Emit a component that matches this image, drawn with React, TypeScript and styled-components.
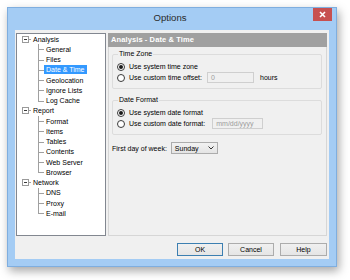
import styled, { createGlobalStyle } from 'styled-components';

const GlobalStyle = createGlobalStyle`
  html, body {
    margin: 0;
    padding: 0;
    background: #ffffff;
  }
  body {
    font-family: 'Liberation Sans', Arial, sans-serif;
  }
  * {
    box-sizing: border-box;
  }
`;

type TreeNode = { label: string; children: string[] };

const tree: TreeNode[] = [
  {
    label: 'Analysis',
    children: ['General', 'Files', 'Date & Time', 'Geolocation', 'Ignore Lists', 'Log Cache'],
  },
  {
    label: 'Report',
    children: ['Format', 'Items', 'Tables', 'Contents', 'Web Server', 'Browser'],
  },
  { label: 'Network', children: ['DNS', 'Proxy', 'E-mail'] },
];

const selected = 'Date & Time';

const App = () => {
  return (
    <Page>
      <GlobalStyle />
      <Window>
        <TitleBar>
          <span />
          <Title>Options</Title>
          <CloseButton>
            <svg width="7" height="7" viewBox="0 0 7 7">
              <path d="M1 1 L6 6 M6 1 L1 6" stroke="#ffffff" strokeWidth="1.6" />
            </svg>
          </CloseButton>
        </TitleBar>
        <Client>
          <Panels>
            <TreePanel>
              {tree.map((node) => (
                <div key={node.label}>
                  <ParentRow>
                    <ExpandBox />
                    <HLine />
                    <Label>{node.label}</Label>
                  </ParentRow>
                  {node.children.map((child, i) => (
                    <ChildRow key={child}>
                      <Connector $last={i === node.children.length - 1} />
                      <Label $selected={child === selected}>{child}</Label>
                    </ChildRow>
                  ))}
                </div>
              ))}
            </TreePanel>
            <ContentPanel>
              <Header>Analysis - Date &amp; Time</Header>
              <ContentBody>
                <Group>
                  <Legend>Time Zone</Legend>
                  <RadioRow>
                    <Radio $checked />
                    <RadioText>Use system time zone</RadioText>
                  </RadioRow>
                  <RadioRow>
                    <Radio />
                    <RadioText>Use custom time offset:</RadioText>
                    <TextBox>0</TextBox>
                    <Suffix>hours</Suffix>
                  </RadioRow>
                </Group>
                <Group $spaced>
                  <Legend>Date Format</Legend>
                  <RadioRow>
                    <Radio $checked />
                    <RadioText>Use system date format</RadioText>
                  </RadioRow>
                  <RadioRow>
                    <Radio />
                    <RadioText>Use custom date format:</RadioText>
                    <TextBox $wide>mm/dd/yyyy</TextBox>
                  </RadioRow>
                </Group>
                <WeekRow>
                  <RadioText>First day of week:</RadioText>
                  <Select>
                    <span>Sunday</span>
                    <svg width="6" height="4" viewBox="0 0 6 4">
                      <path d="M0.5 0.5 L3 3 L5.5 0.5" stroke="#333" strokeWidth="1" fill="none" />
                    </svg>
                  </Select>
                </WeekRow>
              </ContentBody>
            </ContentPanel>
          </Panels>
          <Footer>
            <Button $default>OK</Button>
            <Button>Cancel</Button>
            <Button $wide>Help</Button>
          </Footer>
        </Client>
      </Window>
    </Page>
  );
};

export default App;

const Page = styled.div`
  padding: 7px;
  width: 350px;
  height: 280px;
`;

const Window = styled.div`
  width: 330px;
  height: 260px;
  border: 1px solid #7faedf;
  background: #a4ccf4;
  padding: 0 7px 7px 7px;
  display: flex;
  flex-direction: column;
  box-shadow: 2px 4px 9px rgba(0, 0, 0, 0.35);
`;

const TitleBar = styled.div`
  height: 22px;
  margin: 0 -7px;
  padding-right: 4px;
  display: grid;
  grid-template-columns: 1fr auto 1fr;
  align-items: start;
`;

const Title = styled.div`
  font-size: 9.6px;
  color: #2a2a2a;
  line-height: 19px;
`;

const CloseButton = styled.div`
  justify-self: end;
  width: 19px;
  height: 13px;
  background: #c75050;
  display: flex;
  align-items: center;
  justify-content: center;
`;

const Client = styled.div`
  flex: 1;
  background: #f0f0f0;
  padding: 3px 2px 3px 1px;
  display: flex;
  flex-direction: column;
`;

const Panels = styled.div`
  height: 203px;
  display: flex;
  gap: 2px;
`;

const TreePanel = styled.div`
  width: 90px;
  background: #ffffff;
  border: 1px solid #828790;
`;

const ParentRow = styled.div`
  height: 10.25px;
  display: flex;
  align-items: center;
  padding-left: 5px;
`;

const ExpandBox = styled.div`
  width: 7px;
  height: 7px;
  border: 1px solid #9a9a9a;
  background: #ffffff;
  display: flex;
  align-items: center;
  justify-content: center;
  &::after {
    content: '';
    width: 3px;
    height: 1px;
    background: #3a3a3a;
  }
`;

const HLine = styled.div`
  width: 2px;
  height: 1px;
  background: #a0a0a0;
`;

const ChildRow = styled.div`
  height: 10.25px;
  display: flex;
  align-items: center;
  padding-left: 21px;
`;

const Connector = styled.div<{ $last?: boolean }>`
  position: relative;
  width: 6px;
  height: 100%;
  &::before {
    content: '';
    position: absolute;
    left: 0;
    top: 0;
    width: 1px;
    height: ${(p) => (p.$last ? '50%' : '100%')};
    background: #a0a0a0;
  }
  &::after {
    content: '';
    position: absolute;
    left: 0;
    top: 50%;
    width: 6px;
    height: 1px;
    background: #a0a0a0;
  }
`;

const Label = styled.span<{ $selected?: boolean }>`
  font-size: 7px;
  line-height: 9px;
  padding: 0 2px;
  white-space: nowrap;
  color: ${(p) => (p.$selected ? '#ffffff' : '#000000')};
  background: ${(p) => (p.$selected ? '#3399ff' : 'transparent')};
`;

const ContentPanel = styled.div`
  width: 219px;
  border: 1px solid #d6d6d6;
  border-top: none;
  display: flex;
  flex-direction: column;
`;

const Header = styled.div`
  height: 14px;
  margin: 0 -1px;
  background: #a0a0a0;
  color: #ffffff;
  font-weight: bold;
  font-size: 7.5px;
  line-height: 14px;
  padding-left: 3px;
  letter-spacing: 0.1px;
`;

const ContentBody = styled.div`
  padding: 0 4px 0 3px;
  display: flex;
  flex-direction: column;
`;

const Group = styled.fieldset<{ $spaced?: boolean }>`
  margin: ${(p) => (p.$spaced ? '7px' : '3px')} 0 0 0;
  padding: 3px 4px 5px 4px;
  border: 1px solid #dcdcdc;
  border-radius: 2px;
  min-width: 0;
`;

const Legend = styled.legend`
  font-size: 7px;
  line-height: 8px;
  padding: 0 1px;
  margin-left: 1px;
  color: #000000;
`;

const RadioRow = styled.div`
  height: 11px;
  display: flex;
  align-items: center;
`;

const Radio = styled.div<{ $checked?: boolean }>`
  width: 8px;
  height: 8px;
  border: 1px solid #3a3a3a;
  border-radius: 50%;
  background: #ffffff;
  margin-right: 4px;
  display: flex;
  align-items: center;
  justify-content: center;
  &::after {
    content: '';
    width: 4px;
    height: 4px;
    border-radius: 50%;
    background: ${(p) => (p.$checked ? '#1a1a1a' : 'transparent')};
  }
`;

const RadioText = styled.span`
  font-size: 7px;
  color: #000000;
  white-space: nowrap;
`;

const TextBox = styled.div<{ $wide?: boolean }>`
  width: ${(p) => (p.$wide ? '51px' : '47px')};
  height: 11px;
  margin-left: ${(p) => (p.$wide ? '7px' : '5px')};
  border: 1px solid #cfcfcf;
  background: #f0f0f0;
  color: #9c9c9c;
  font-size: 7px;
  line-height: 9px;
  padding: 0 3px;
`;

const Suffix = styled.span`
  font-size: 7px;
  margin-left: 6px;
  color: #000000;
`;

const WeekRow = styled.div`
  margin-top: 7px;
  height: 12px;
  display: flex;
  align-items: center;
  gap: 4px;
`;

const Select = styled.div`
  width: 47px;
  height: 12px;
  border: 1px solid #acacac;
  background: linear-gradient(#f2f2f2, #e4e4e4);
  font-size: 7px;
  padding: 0 3px 0 3px;
  display: flex;
  align-items: center;
  justify-content: space-between;
`;

const Footer = styled.div`
  margin-top: 7px;
  height: 13px;
  display: flex;
  justify-content: flex-end;
  gap: 5px;
`;

const Button = styled.div<{ $default?: boolean; $wide?: boolean }>`
  width: ${(p) => (p.$wide ? '47px' : '46px')};
  height: 13px;
  margin-left: ${(p) => (p.$wide ? '1px' : '0')};
  border: 1px solid ${(p) => (p.$default ? '#3c7fb1' : '#acacac')};
  background: linear-gradient(#f0f0f0, #e5e5e5);
  font-size: 7px;
  color: #000000;
  display: flex;
  align-items: center;
  justify-content: center;
`;
